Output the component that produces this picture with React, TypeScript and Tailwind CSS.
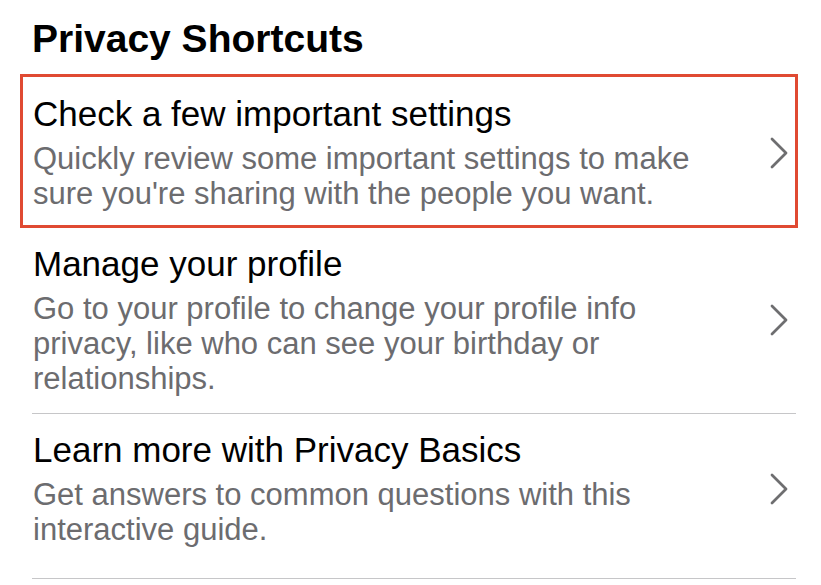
const items = [
  {
    title: "Manage your profile",
    text: "Go to your profile to change your profile info privacy, like who can see your birthday or relationships.",
    pb: "pb-[17px]",
  },
  {
    title: "Learn more with Privacy Basics",
    text: "Get answers to common questions with this interactive guide.",
    pb: "pb-[31px]",
  },
]

function Chevron() {
  return (
    <svg width="18" height="32" viewBox="0 0 18 32" fill="none" className="shrink-0">
      <path d="M2 2 L16 16 L2 30" stroke="#6e6e70" strokeWidth="2.8" strokeLinecap="round" strokeLinejoin="round" />
    </svg>
  )
}

function Row({ title, text }: { title: string; text: string }) {
  return (
    <div className="flex items-center">
      <div className="w-[700px]">
        <div className="text-[35px] leading-[40px] text-black">{title}</div>
        <div className="mt-[7px] text-[31px] leading-[35px] text-[#6c6c6f]">{text}</div>
      </div>
      <div className="ml-auto">
        <Chevron />
      </div>
    </div>
  )
}

export default function App() {
  return (
    <div className="w-[821px] h-[585px] overflow-hidden bg-white font-['Liberation_Sans',Arial,sans-serif]">
      <h1 className="pt-[17px] pl-[32px] text-[39px] leading-[44px] font-bold text-black">Privacy Shortcuts</h1>

      {/* highlighted shortcut */}
      <div className="mt-[13px] ml-[20px] w-[778px] border-[3px] border-[#e04a32] pt-[17px] pb-[14px] pl-[10px] pr-[7px]">
        <Row
          title="Check a few important settings"
          text="Quickly review some important settings to make sure you're sharing with the people you want."
        />
      </div>

      <div className="ml-[32px] w-[764px]">
        {items.map((item, i) => (
          <div key={i} className={`border-b border-[#c6c6c8] pr-[8px] pl-[1px] pt-[16px] ${item.pb}`}>
            <Row title={item.title} text={item.text} />
          </div>
        ))}
      </div>
    </div>
  )
}
